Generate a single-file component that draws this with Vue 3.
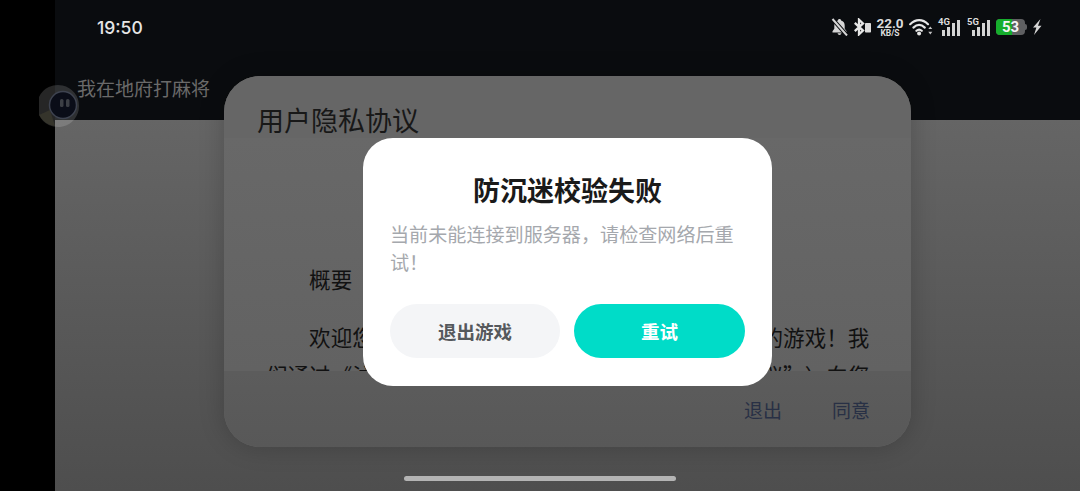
<template>
  <div class="page">
    <div class="edge"></div>
    <div class="screen">
      <div class="topbar">
        <div class="status">
          <span class="time">19:50</span>
          <div class="status-icons">
            <svg class="ic" width="17" height="18" viewBox="0 0 17 18">
              <path d="M8.500 1c-.9 0-1.500.6-1.600 1.400C4.500 3 3.300 5 3.300 7.500v3.300L1.500 13.300V14.500h14v-1.200l-1.800-2.500V7.500c0-2.500-1.200-4.500-3.600-5.100C10 1.600 9.400 1 8.500 1zM6.600 15.300c.2 1 1 1.700 1.900 1.700s1.700-.7 1.900-1.700z" fill="#d6d6d6"/>
              <path d="M1.500 1 16 17.500" stroke="#0a0c0f" stroke-width="4"/>
              <path d="M1.500 1 16 17.500" stroke="#d6d6d6" stroke-width="2"/>
            </svg>
            <svg class="ic bt" width="17" height="18" viewBox="0 0 17 18">
              <path d="M.8 4.800 9 12.600 5 16.300V1.700l4 3.700L.8 13.200" fill="none" stroke="#e6e6e6" stroke-width="2.300"/>
              <rect x="11" y="5" width="6" height="9.500" rx="0.800" fill="#dcdcdc"/>
            </svg>
            <div class="speed"><b>22.0</b><i>KB/S</i></div>
            <svg class="ic wifi" width="24" height="18" viewBox="0 0 24 18">
              <g fill="none" stroke="#e6e6e6" stroke-width="2.200" stroke-linecap="round">
                <path d="M1.200 6.200C6.800.8 13.600.8 19 6.200"/>
                <path d="M4.400 9.600C8 6.200 12.200 6.200 15.800 9.600"/>
                <path d="M7.400 12.800c1.800-1.600 3.600-1.600 5.400 0"/>
              </g>
              <circle cx="10.100" cy="15.600" r="2" fill="#e6e6e6"/>
              <path d="M21.300 8.400 23.300 11h-4zM21.300 16.400 19.300 13.800h4z" fill="#c4c4c4"/>
            </svg>
            <div class="signal">
              <span class="net">4G</span>
              <span class="bars"><i v-for="h in barHeights" :key="h" :style="{ height: h + 'px' }"></i></span>
            </div>
            <div class="signal five">
              <span class="net">5G</span>
              <span class="bars"><i v-for="h in barHeights" :key="h" :style="{ height: h + 'px' }"></i></span>
            </div>
            <div class="battery">
              <div class="batt-body">
                <span class="batt-fill" :style="{ width: level + 3 + '%' }"></span>
                <span class="batt-num">{{ level }}</span>
              </div>
              <span class="batt-cap"></span>
            </div>
            <svg class="bolt" width="10" height="16" viewBox="0 0 10 16">
              <path d="M8.500 0 1 8.600h3.400L2 16 9.500 6.800H6z" fill="#d6d6d6"/>
            </svg>
          </div>
        </div>
        <div class="app-name">我在地府打麻将</div>
      </div>
      <div class="content"></div>

      <div class="scrim">
        <div class="privacy">
          <div class="privacy-head">用户隐私协议</div>
          <div class="privacy-body">
            <p>概要</p>
            <p>欢迎您使用我们提供的产品和服务&#xFF0C;并体验我们的游戏&#xFF01;我们通过&#x300A;注册与用户隐私权协议&#x300B;&#xFF08;以下简称&#x201C;本协议&#x201D;&#xFF09;向您说明我们如何收集和使用您的个人信息&#x3002;</p>
          </div>
          <div class="privacy-foot">
            <span>退出</span>
            <span>同意</span>
          </div>
        </div>
      </div>

      <div class="scrim">
        <div class="alert">
          <h2>防沉迷校验失败</h2>
          <p>当前未能连接到服务器&#xFF0C;请检查网络后重试&#xFF01;</p>
          <div class="alert-btns">
            <button class="btn quit">退出游戏</button>
            <button class="btn retry">重试</button>
          </div>
        </div>
      </div>

      <div class="homebar"></div>
    </div>

    <div class="floater">
      <svg width="42" height="48" viewBox="0 0 42 48">
        <path d="M1 15A21 21 0 0 1 41 24 21 21 0 0 1 1 33z" fill="#fff" fill-opacity="0.15"/>
        <path d="M1 33 12 28 17 44A21 21 0 0 1 1 33z" fill="#a89a50" fill-opacity="0.12"/>
        <circle cx="25" cy="23" r="13.500" fill="#0a0d18" stroke="#3e4350" stroke-width="1.500"/>
        <rect x="22" y="17" width="3.500" height="8" rx="1.500" fill="#3c3f45"/>
        <rect x="28" y="17" width="3.500" height="8" rx="1.500" fill="#3c3f45"/>
      </svg>
    </div>
  </div>
</template>

<script setup>
const level = 53
const barHeights = [6, 9, 13, 16]
</script>

<style>
html,
body {
  margin: 0;
  background: #000;
}
</style>

<style scoped>
.page {
  position: relative;
  display: flex;
  width: 1080px;
  height: 491px;
  overflow: hidden;
  background: #000;
  font-family: "Noto Sans CJK SC", "Noto Sans", sans-serif;
}
.edge {
  flex: 0 0 55px;
  background: #000;
}
.screen {
  position: relative;
  flex: 1;
  display: flex;
  flex-direction: column;
  min-width: 0;
}
.topbar {
  flex: 0 0 120px;
  background: #0a0c0f;
  box-sizing: border-box;
}
.status {
  height: 54px;
  display: flex;
  align-items: center;
  justify-content: space-between;
  padding: 0 38px 0 42px;
}
.time {
  font-family: Inter, Roboto, sans-serif;
  font-weight: 500;
  font-size: 17.500px;
  color: #e6e6e6;
}
.status-icons {
  display: flex;
  align-items: center;
}
.ic {
  display: block;
}
.bt {
  margin-left: 6px;
}
.speed {
  display: flex;
  flex-direction: column;
  align-items: center;
  width: 26px;
  margin-left: 6px;
  font-family: Roboto, Inter, sans-serif;
  color: #dcdcdc;
}
.speed b {
  font-size: 13.500px;
  line-height: 11px;
  font-weight: 700;
}
.speed i {
  font-size: 8.500px;
  line-height: 8px;
  font-style: normal;
  font-weight: 700;
}
.wifi {
  margin-left: 6px;
}
.signal {
  position: relative;
  width: 22px;
  height: 18px;
  margin-left: 5px;
}
.signal.five {
  width: 23px;
  margin-left: 7px;
}
.net {
  position: absolute;
  left: 0;
  top: -1px;
  font-family: Roboto, sans-serif;
  font-weight: 700;
  font-size: 9.500px;
  line-height: 10px;
  color: #dcdcdc;
}
.bars {
  position: absolute;
  right: 0;
  bottom: 0;
  display: flex;
  align-items: flex-end;
  gap: 2px;
}
.bars i {
  display: block;
  width: 3px;
  background: #d4d4d4;
}
.battery {
  display: flex;
  align-items: center;
  margin-left: 6px;
}
.batt-body {
  position: relative;
  width: 29px;
  height: 16px;
  border-radius: 4px;
  background: #5f6062;
}
.batt-fill {
  position: absolute;
  left: 0;
  top: 0;
  bottom: 0;
  border-radius: 4px 0 0 4px;
  background: #16ae2c;
}
.batt-num {
  position: absolute;
  inset: 0;
  text-align: center;
  font-family: Roboto, sans-serif;
  font-weight: 700;
  font-size: 15px;
  line-height: 16px;
  color: #f4f4f4;
}
.batt-cap {
  width: 2px;
  height: 6px;
  border-radius: 0 2px 2px 0;
  background: #5f6062;
}
.bolt {
  margin-left: 5px;
}
.app-name {
  padding-left: 22px;
  margin-top: 20px;
  font-size: 19px;
  line-height: 28px;
  color: #6a6a6a;
}
.content {
  flex: 1;
  background: linear-gradient(#656565, #4e4e4e);
}
.scrim {
  position: absolute;
  inset: 0;
  padding-top: 32px;
  display: flex;
  align-items: center;
  justify-content: center;
}
.privacy {
  display: flex;
  flex-direction: column;
  width: 687px;
  height: 371px;
  border-radius: 36px;
  overflow: hidden;
  background: #676767;
  box-shadow: 0 0 26px rgba(0, 0, 0, 0.2);
}
.privacy-head {
  flex: 0 0 62px;
  box-sizing: border-box;
  padding: 24px 0 0 33px;
  font-size: 27px;
  line-height: 40px;
  color: #181818;
  background: #666;
  overflow: hidden;
}
.privacy-body {
  flex: 1;
  min-height: 0;
  overflow: hidden;
  padding: 122px 41px 0 42px;
  background: linear-gradient(#686868, #626262);
}
.privacy-body p {
  margin: 0 0 20px;
  text-indent: 2em;
  text-spacing-trim: space-all;
  font-size: 21.550px;
  line-height: 38px;
  color: #111;
}
.privacy-foot {
  flex: 0 0 76px;
  display: flex;
  align-items: center;
  justify-content: flex-end;
  gap: 50px;
  padding-right: 41px;
  background: linear-gradient(#5c5c5c, #585858);
  font-size: 19px;
  color: #283045;
}
.alert {
  box-sizing: border-box;
  width: 409px;
  height: 248px;
  padding: 32px 27px 0;
  border-radius: 30px;
  background: #fff;
}
.alert h2 {
  margin: 0;
  text-align: center;
  font-size: 27px;
  line-height: 40px;
  font-weight: 700;
  color: #1a1a1a;
}
.alert p {
  margin: 10px 0 0;
  font-size: 19.100px;
  line-height: 28px;
  color: #a5a8ad;
}
.alert-btns {
  display: flex;
  gap: 14px;
  margin-top: 28px;
}
.btn {
  height: 54px;
  padding: 0;
  border: 0;
  border-radius: 27px;
  font-family: inherit;
  font-size: 18.500px;
  font-weight: 700;
}
.quit {
  flex: 0 0 170px;
  background: #f4f5f7;
  color: #55585c;
}
.retry {
  flex: 1;
  background: #00dcc8;
  color: #fff;
}
.homebar {
  position: absolute;
  left: 349px;
  bottom: 10px;
  width: 272px;
  height: 5px;
  border-radius: 3px;
  background: #b4b4b4;
}
.floater {
  position: absolute;
  left: 38px;
  top: 82px;
}
.floater svg {
  display: block;
}
</style>
